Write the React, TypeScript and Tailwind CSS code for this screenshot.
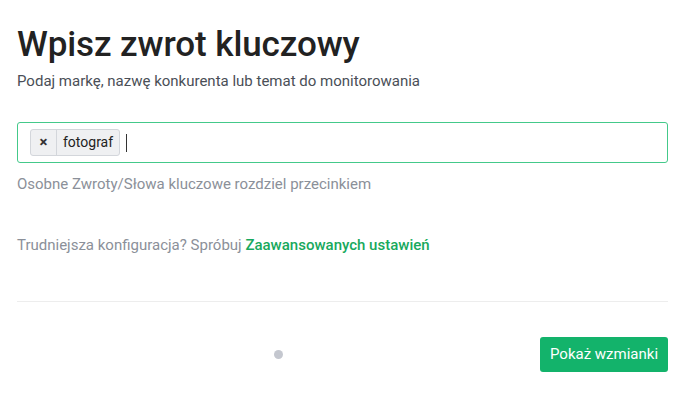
export default function App() {
  return (
    <div className="w-[700px] h-[402px] bg-white pl-[17px] pr-[32px] pt-[23px] font-['Roboto',sans-serif]">
      <h1 className="text-[35px] leading-[43px] font-medium text-[#222222] tracking-[-0.1px]">Wpisz zwrot kluczowy</h1>
      <p className="mt-[4px] text-[15px] leading-[22px] text-[#4a4f57]">
        Podaj markę, nazwę konkurenta lub temat do monitorowania
      </p>

      {/* keyword input */}
      <div className="mt-[30px] h-[41px] rounded-[3px] border border-[#44c98a] flex items-center pl-[12px]">
        <div className="flex items-stretch h-[27px] rounded-[3px] border border-[#d3d6db] bg-[#eff0f2]">
          <span className="w-[26px] flex items-center justify-center border-r border-[#d3d6db] text-[15px] font-bold text-[#333]">×</span>
          <span className="px-[6px] flex items-center text-[14px] text-[#222]">fotograf</span>
        </div>
        <span className="ml-[6px] w-px h-[18px] bg-[#333]" />
      </div>
      <p className="mt-[11px] text-[15px] leading-[20px] text-[#8b9099]">
        Osobne Zwroty/Słowa kluczowe rozdziel przecinkiem
      </p>

      <p className="mt-[41px] text-[15px] leading-[20px] text-[#8b9099]">
        Trudniejsza konfiguracja? Spróbuj{' '}
        <a className="font-medium text-[#18a95d]" href="#">Zaawansowanych ustawień</a>
      </p>

      <div className="mt-[46px] border-t border-[#ededed]" />

      <div className="mt-[35px] flex items-center">
        <div className="flex-1 flex justify-center">
          <span className="w-[9px] h-[9px] rounded-full bg-[#c4c7cf]" />
        </div>
        <button className="w-[128px] h-[35px] rounded-[3px] bg-[#13b36b] text-white text-[15px]">
          Pokaż wzmianki
        </button>
      </div>
    </div>
  )
}
